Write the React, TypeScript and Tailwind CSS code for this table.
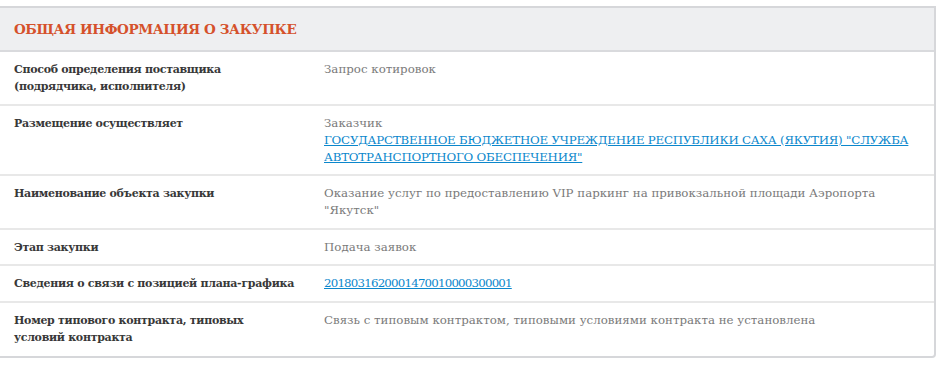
import React from "react";

type Row = {
  label: string;
  value?: string;
  caption?: string;
  link?: string;
  numeric?: boolean;
};

const rows: Row[] = [
  { label: "Способ определения поставщика (подрядчика, исполнителя)", value: "Запрос котировок" },
  {
    label: "Размещение осуществляет",
    caption: "Заказчик",
    link: 'ГОСУДАРСТВЕННОЕ БЮДЖЕТНОЕ УЧРЕЖДЕНИЕ РЕСПУБЛИКИ САХА (ЯКУТИЯ) "СЛУЖБА АВТОТРАНСПОРТНОГО ОБЕСПЕЧЕНИЯ"',
  },
  {
    label: "Наименование объекта закупки",
    value: 'Оказание услуг по предоставлению VIP паркинг на привокзальной площади Аэропорта "Якутск"',
  },
  { label: "Этап закупки", value: "Подача заявок" },
  { label: "Сведения о связи с позицией плана-графика", link: "2018031620001470010000300001", numeric: true },
  {
    label: "Номер типового контракта, типовых условий контракта",
    value: "Связь с типовым контрактом, типовыми условиями контракта не установлена",
  },
];

export default function App() {
  return (
    <div className="w-[938px] h-[368px] bg-white pt-[6px] font-['DejaVu_Serif',serif]">
      <div className="w-[936px] border-t-2 border-r-2 border-b-2 border-[#d6d7da] rounded-br-[4px] bg-white">
        <div className="h-[44px] bg-[#eeeff1] border-b-2 border-[#d9dadd] flex items-center px-[14px]">
          <h2 className="text-[13.5px] font-bold uppercase text-[#d5512b] tracking-[-0.4px]">
            Общая информация о закупке
          </h2>
        </div>
        {rows.map((row, i) => (
          <div
            key={i}
            className={
              "grid grid-cols-[310px_1fr] pt-[9px] leading-[17px] " +
              (i < rows.length - 1 ? "pb-[8.5px] border-b-2 border-[#e8e8e8]" : "pb-[10px]")
            }
          >
            <div className="pl-[14px] pr-[14px] text-[11px] tracking-[-0.3px] font-bold text-[#383838]">
              {row.label}
            </div>
            <div className="pl-[14px] pr-[12px] text-[11.8px] text-[#7a7a7a]">
              {row.caption && <div>{row.caption}</div>}
              {row.value && <div>{row.value}</div>}
              {row.link && (
                <a
                  href="#"
                  className={
                    "text-[#0b87cc] underline " + (row.numeric ? "tracking-[-0.8px]" : "tracking-[-0.2px]")
                  }
                >
                  {row.link}
                </a>
              )}
            </div>
          </div>
        ))}
      </div>
    </div>
  );
}
